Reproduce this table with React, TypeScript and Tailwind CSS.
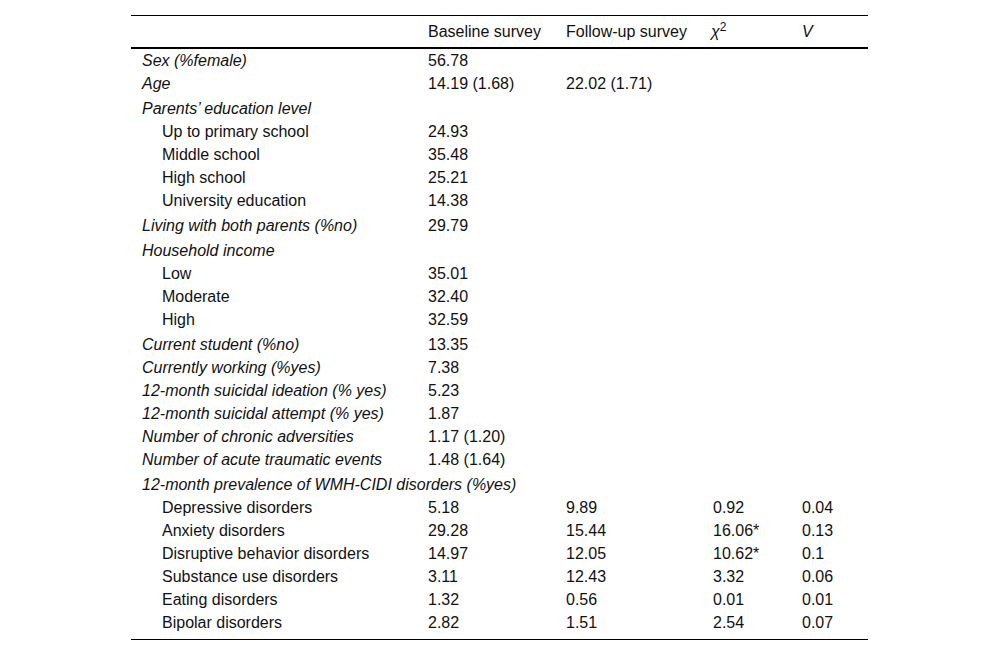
import React from "react";

type Row = {
  label: string;
  italic?: boolean;
  indent?: boolean;
  h?: number;
  b?: string;
  f?: string;
  c?: string;
  v?: string;
};

const rows: Row[] = [
  { label: "Sex (%female)", italic: true, b: "56.78" },
  { label: "Age", italic: true, b: "14.19 (1.68)", f: "22.02 (1.71)", h: 25 },
  { label: "Parents\u2019 education level", italic: true },
  { label: "Up to primary school", indent: true, b: "24.93" },
  { label: "Middle school", indent: true, b: "35.48" },
  { label: "High school", indent: true, b: "25.21" },
  { label: "University education", indent: true, b: "14.38", h: 25 },
  { label: "Living with both parents (%no)", italic: true, b: "29.79", h: 25 },
  { label: "Household income", italic: true },
  { label: "Low", indent: true, b: "35.01" },
  { label: "Moderate", indent: true, b: "32.40" },
  { label: "High", indent: true, b: "32.59", h: 25 },
  { label: "Current student (%no)", italic: true, b: "13.35" },
  { label: "Currently working (%yes)", italic: true, b: "7.38" },
  { label: "12-month suicidal ideation (% yes)", italic: true, b: "5.23" },
  { label: "12-month suicidal attempt (% yes)", italic: true, b: "1.87" },
  { label: "Number of chronic adversities", italic: true, b: "1.17 (1.20)" },
  { label: "Number of acute traumatic events", italic: true, b: "1.48 (1.64)", h: 25 },
  { label: "12-month prevalence of WMH-CIDI disorders (%yes)", italic: true },
  { label: "Depressive disorders", indent: true, b: "5.18", f: "9.89", c: "0.92", v: "0.04" },
  { label: "Anxiety disorders", indent: true, b: "29.28", f: "15.44", c: "16.06*", v: "0.13" },
  { label: "Disruptive behavior disorders", indent: true, b: "14.97", f: "12.05", c: "10.62*", v: "0.1" },
  { label: "Substance use disorders", indent: true, b: "3.11", f: "12.43", c: "3.32", v: "0.06" },
  { label: "Eating disorders", indent: true, b: "1.32", f: "0.56", c: "0.01", v: "0.01" },
  { label: "Bipolar disorders", indent: true, b: "2.82", f: "1.51", c: "2.54", v: "0.07", h: 28 },
];

const gridCols = "grid grid-cols-[287px_138px_147px_89px_76px]";

export default function App() {
  return (
    <div
      className="w-[1000px] h-[655px] bg-white text-[#111] text-[16px]"
      style={{ fontFamily: '"Liberation Sans", Arial, sans-serif' }}
    >
      <div className="pt-[15px] pl-[131px]">
        <div className="w-[737px]">
          <div className={`${gridCols} h-[34px] border-t border-b-2 border-black items-center leading-[23px]`}>
            <div className="pl-[11px]"></div>
            <div className="pl-[10px] whitespace-nowrap">Baseline survey</div>
            <div className="pl-[10px] whitespace-nowrap">Follow-up survey</div>
            <div className="pl-[8px] whitespace-nowrap">
              <i>χ</i>
              <sup>2</sup>
            </div>
            <div className="pl-[10px]">
              <i>V</i>
            </div>
          </div>
          {rows.map((r, i) => (
            <div
              key={i}
              className={`${gridCols} leading-[23px] items-start ${
                r.h === 25 ? "h-[25px]" : r.h === 28 ? "h-[28px]" : "h-[23px]"
              }`}
            >
              <div
                className={`whitespace-nowrap ${r.indent ? "pl-[31px]" : "pl-[11px]"} ${
                  r.italic ? "italic" : ""
                }`}
              >
                {r.label}
              </div>
              <div className="pl-[10px] whitespace-nowrap">{r.b ?? ""}</div>
              <div className="pl-[10px] whitespace-nowrap">{r.f ?? ""}</div>
              <div className="pl-[10px] whitespace-nowrap">{r.c ?? ""}</div>
              <div className="pl-[10px] whitespace-nowrap">{r.v ?? ""}</div>
            </div>
          ))}
          <div className="border-t border-black"></div>
        </div>
      </div>
    </div>
  );
}
